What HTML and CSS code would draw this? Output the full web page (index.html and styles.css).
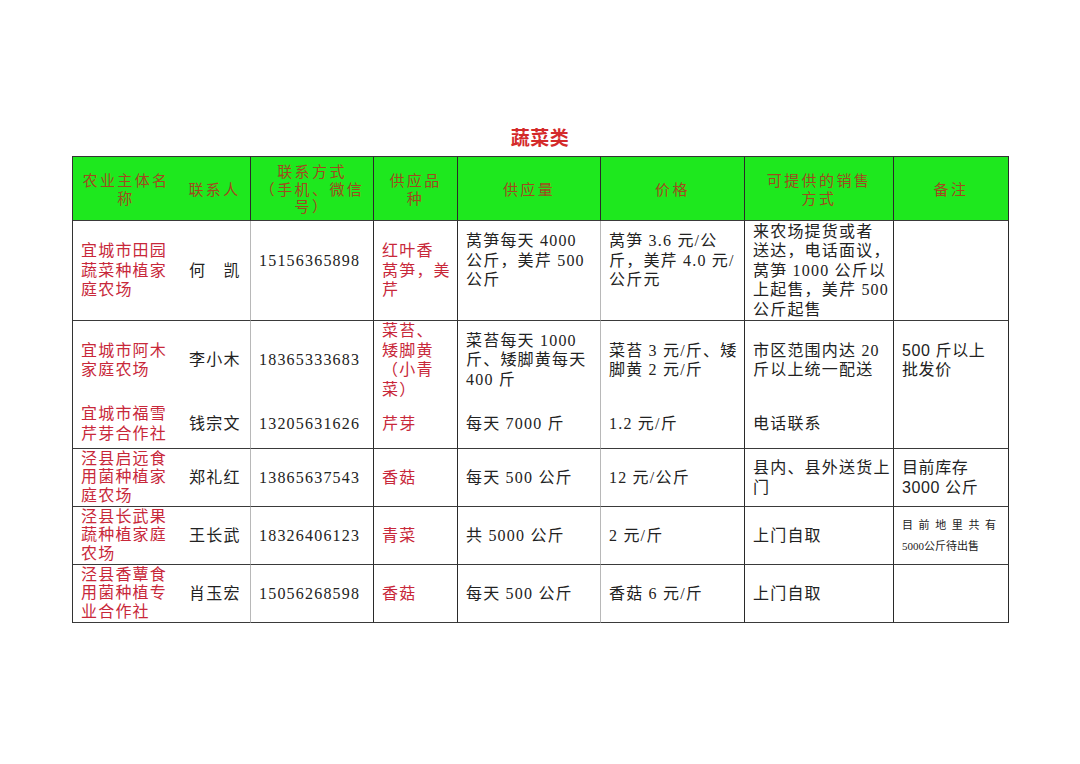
FILE: index.html
```html
<!DOCTYPE html>
<html lang="zh-CN">
<head>
<meta charset="utf-8">
<title>蔬菜类</title>
<link rel="stylesheet" href="styles.css">
</head>
<body>
<div class="page">
  <h1 class="title">蔬菜类</h1>
  <table class="grid">
    <colgroup>
      <col class="c-name"><col class="c-person"><col class="c-phone"><col class="c-variety">
      <col class="c-supply"><col class="c-price"><col class="c-sale"><col class="c-note">
    </colgroup>
    <thead>
      <tr class="h-head">
        <th class="nob">农业主体名<br>称</th>
        <th class="lite">联系人</th>
        <th>联系方式<br>（手机、微信<br>号）</th>
        <th>供应品<br>种</th>
        <th>供应量</th>
        <th>价格</th>
        <th>可提供的销售<br>方式</th>
        <th>备注</th>
      </tr>
    </thead>
    <tbody>
      <tr class="h-r1">
        <td class="nob red">宜城市田园<br>蔬菜种植家<br>庭农场</td>
        <td class="lite person">何&emsp;凯</td>
        <td class="up">15156365898</td>
        <td class="red">红叶香<br>莴笋，美<br>芹</td>
        <td class="lite up">莴笋每天 4000<br>公斤，美芹 500<br>公斤</td>
        <td class="up">莴笋 3.6 元/公<br>斤，美芹 4.0 元/<br>公斤元</td>
        <td>来农场提货或者<br>送达，电话面议，<br>莴笋 1000 公斤以<br>上起售，美芹 500<br>公斤起售</td>
        <td></td>
      </tr>
      <tr class="h-r2">
        <td class="nob red nobot">宜城市阿木<br>家庭农场</td>
        <td class="lite person nobot">李小木</td>
        <td class="nobot">18365333683</td>
        <td class="red nobot">菜苔、<br>矮脚黄<br>（小青<br>菜）</td>
        <td class="lite nobot">菜苔每天 1000<br>斤、矮脚黄每天<br>400 斤</td>
        <td class="nobot">菜苔 3 元/斤、矮<br>脚黄 2 元/斤</td>
        <td class="nobot">市区范围内达 20<br>斤以上统一配送</td>
        <td class="nobot sans">500 斤以上<br>批发价</td>
      </tr>
      <tr class="h-r3">
        <td class="nob red">宜城市福雪<br>芹芽合作社</td>
        <td class="lite person">钱宗文</td>
        <td>13205631626</td>
        <td class="red">芹芽</td>
        <td class="lite">每天 7000 斤</td>
        <td>1.2 元/斤</td>
        <td>电话联系</td>
        <td></td>
      </tr>
      <tr class="h-r4">
        <td class="nob red tight">泾县启远食<br>用菌种植家<br>庭农场</td>
        <td class="lite person">郑礼红</td>
        <td>13865637543</td>
        <td class="red">香菇</td>
        <td class="lite">每天 500 公斤</td>
        <td>12 元/公斤</td>
        <td>县内、县外送货上<br>门</td>
        <td class="sans">目前库存<br>3000 公斤</td>
      </tr>
      <tr class="h-r5">
        <td class="nob red tight">泾县长武果<br>蔬种植家庭<br>农场</td>
        <td class="lite person">王长武</td>
        <td>18326406123</td>
        <td class="red">青菜</td>
        <td class="lite">共 5000 公斤</td>
        <td>2 元/斤</td>
        <td>上门自取</td>
        <td class="small"><span class="spread">目前地里共有</span><br>5000公斤待出售</td>
      </tr>
      <tr class="h-r6">
        <td class="nob red tight">泾县香蕈食<br>用菌种植专<br>业合作社</td>
        <td class="lite person">肖玉宏</td>
        <td>15056268598</td>
        <td class="red">香菇</td>
        <td class="lite">每天 500 公斤</td>
        <td>香菇 6 元/斤</td>
        <td>上门自取</td>
        <td></td>
      </tr>
    </tbody>
  </table>
</div>
</body>
</html>
```

FILE: styles.css
```css
html, body {
  margin: 0;
  padding: 0;
  background: #ffffff;
}

.page {
  padding-top: 125px;
  padding-left: 72px;
}

.title {
  width: 936px;
  margin: 0 0 7px 0;
  text-align: center;
  font-family: "Noto Sans CJK SC", sans-serif;
  font-size: 19px;
  line-height: 24px;
  font-weight: bold;
  color: #d42a2a;
  letter-spacing: 0.5px;
}

.grid {
  table-layout: fixed;
  width: 937px;
  border-collapse: separate;
  border-spacing: 0;
  border-top: 1px solid #333;
  border-left: 1px solid #333;
  font-family: "Liberation Serif", "Noto Sans CJK SC", serif;
  font-size: 16px;
  line-height: 19.5px;
  color: #222222;
  letter-spacing: 1.2px;
}

.c-name { width: 106px; }
.c-person { width: 72px; }
.c-phone { width: 123px; }
.c-variety { width: 84px; }
.c-supply { width: 143px; }
.c-price { width: 144px; }
.c-sale { width: 149px; }
.c-note { width: 115px; }

.grid th,
.grid td {
  padding: 0 0 0 8px;
  border-right: 1px solid #2a2a2a;
  border-bottom: 1px solid #3a3a3a;
  vertical-align: middle;
  white-space: nowrap;
  overflow: hidden;
}

.grid th {
  background: #1ee81e;
  color: #a04a1e;
  font-family: "Noto Sans CJK SC", sans-serif;
  font-weight: normal;
  font-size: 15px;
  line-height: 17.5px;
  text-align: center;
  padding: 0;
  letter-spacing: 2.4px;
}

.grid td.nob,
.grid th.nob {
  border-right: none;
}

.grid td.lite {
  border-right-color: #b8b8b8;
}

.grid td.nobot {
  border-bottom: none;
}

.grid td.red {
  color: #c8283a;
}

.grid td.tight {
  line-height: 18.5px;
}

.grid td.person {
  padding-left: 10px;
}

.grid td.up {
  padding-bottom: 20px;
}

.grid td.sans {
  font-family: "Liberation Sans", "Noto Sans CJK SC", sans-serif;
  letter-spacing: 0.6px;
}

.grid td.small {
  font-family: "Liberation Serif", "Noto Sans CJK SC", serif;
  font-size: 11px;
  line-height: 21px;
  letter-spacing: 0;
}

.spread {
  letter-spacing: 5.6px;
}

.h-head { height: 64px; }
.h-r1 { height: 100px; }
.h-r2 { height: 77px; }
.h-r3 { height: 50px; }
.h-r4 { height: 58px; }
.h-r5 { height: 58px; }
.h-r6 { height: 58px; }
```
